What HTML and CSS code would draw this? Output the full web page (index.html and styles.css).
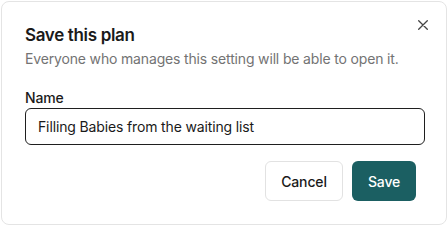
FILE: index.html
```html
<!DOCTYPE html>
<html lang="en">
<head>
    <meta charset="UTF-8">
    <title>Save this plan</title>
    <link rel="stylesheet" href="styles.css">
</head>
<body>
    <div class="save-dialog">
        <button class="close-btn" aria-label="Close">
            <svg width="10" height="10" viewBox="0 0 10 10"><path d="M0.7 0.7L9.3 9.3M9.3 0.7L0.7 9.3" stroke="#444" stroke-width="1.3" stroke-linecap="round"/></svg>
        </button>
        <h2 class="dialog-title">Save this plan</h2>
        <p class="dialog-subtitle">Everyone who manages this setting will be able to open it.</p>
        <div class="field">
            <label for="planName">Name</label>
            <input type="text" id="planName" value="Filling Babies from the waiting list" autocomplete="off">
        </div>
        <div class="dialog-actions">
            <button class="btn btn-secondary">Cancel</button>
            <button class="btn btn-primary">Save</button>
        </div>
    </div>
</body>
</html>
```

FILE: styles.css
```css
body {
    margin: 0;
    background: #fff;
    font-family: 'Inter', 'Liberation Sans', sans-serif;
    color: #1a1a1a;
    letter-spacing: -0.01em;
}

/* Tarjeta del dialogo */
.save-dialog {
    position: relative;
    box-sizing: border-box;
    margin: 1px;
    width: 446px;
    height: 224px;
    padding: 21px 21px 0 23px;
    border: 1px solid #e4e4e4;
    border-radius: 8px;
    background: #fff;
}

/* Boton de cierre */
.close-btn {
    position: absolute;
    top: 18px;
    right: 18px;
    width: 10px;
    height: 10px;
    padding: 0;
    border: none;
    background: transparent;
    display: flex;
    cursor: pointer;
}

.dialog-title {
    margin: 0;
    font-size: 17px;
    line-height: 24px;
    font-weight: 600;
    letter-spacing: -0.02em;
    color: #1a1a1a;
}

.dialog-subtitle {
    margin: 2px 0 0 0;
    font-size: 14px;
    line-height: 20px;
    color: #737373;
}

.field {
    display: flex;
    flex-direction: column;
    margin-top: 19px;
}

.field label {
    font-size: 14px;
    line-height: 20px;
    font-weight: 500;
    color: #1a1a1a;
}

.field input {
    box-sizing: border-box;
    width: 400px;
    height: 37px;
    padding: 0 12px;
    font-family: inherit;
    font-size: 14px;
    letter-spacing: -0.01em;
    color: #1a1a1a;
    border: 1px solid #1f1f1f;
    border-radius: 6px;
    outline: none;
}

/* Acciones */
.dialog-actions {
    display: flex;
    justify-content: flex-end;
    gap: 9px;
    margin-top: 16px;
    padding-right: 9px;
}

.btn {
    box-sizing: border-box;
    height: 40px;
    padding: 0;
    font-family: inherit;
    font-size: 14px;
    font-weight: 500;
    letter-spacing: -0.01em;
    border-radius: 6px;
    cursor: pointer;
}

.btn-secondary {
    width: 78px;
    background: #fff;
    color: #1a1a1a;
    border: 1px solid #e2e2e2;
}

.btn-primary {
    width: 64px;
    background: #1b5f62;
    color: #fff;
    border: none;
}
```
